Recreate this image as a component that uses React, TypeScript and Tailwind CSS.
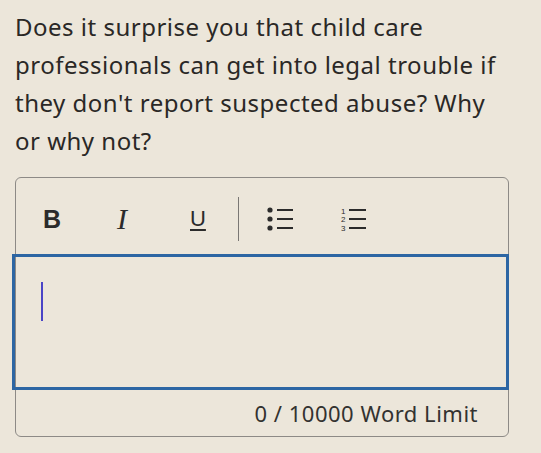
import React from 'react';

const BulletIcon = () => (
  <svg width="28" height="26" viewBox="0 0 28 26" fill="none">
    <circle cx="3" cy="4" r="2.6" fill="#2b2b2b" />
    <circle cx="3" cy="13" r="2.6" fill="#2b2b2b" />
    <circle cx="3" cy="22" r="2.6" fill="#2b2b2b" />
    <path d="M10 4h16M10 13h16M10 22h16" stroke="#2b2b2b" strokeWidth="2.2" />
  </svg>
);

const NumberIcon = () => (
  <svg width="28" height="26" viewBox="0 0 28 26" fill="none">
    <text x="0" y="7.5" fontSize="8" fontFamily="Liberation Sans, sans-serif" fill="#2b2b2b">1</text>
    <text x="0" y="16" fontSize="8" fontFamily="Liberation Sans, sans-serif" fill="#2b2b2b">2</text>
    <text x="0" y="25" fontSize="8" fontFamily="Liberation Sans, sans-serif" fill="#2b2b2b">3</text>
    <path d="M8 4h17M8 13h17M8 22h17" stroke="#2b2b2b" strokeWidth="2.2" />
  </svg>
);

export default function App() {
  return (
    <div className="w-[541px] h-[453px] bg-[#ece6da] pt-[8px] pl-[15px] overflow-hidden" style={{ fontFamily: '"Noto Sans", sans-serif' }}>
      <p className="text-[24px] leading-[38px] tracking-[0.5px] text-[#2a2826] w-[496px]">
        Does it surprise you that child care professionals can get into legal trouble if they don't report suspected abuse? Why or why not?
      </p>

      <div className="mt-[17px] w-[494px] border border-[#8d8a86] rounded-[6px]">
        <div className="h-[76px] flex items-center pt-[6px] pl-[27px]">
          <span className="w-[18px] text-[25px] font-bold text-[#2b2b2b] leading-none" style={{ fontFamily: '"Liberation Sans", sans-serif' }}>B</span>
          <span className="ml-[56px] w-[18px] text-[30px] italic text-[#2b2b2b] leading-none" style={{ fontFamily: '"Liberation Serif", serif' }}>I</span>
          <span className="ml-[55px] text-[22px] underline underline-offset-[3px] text-[#2b2b2b] leading-none" style={{ fontFamily: '"Liberation Sans", sans-serif' }}>U</span>
          <span className="ml-[32px] w-px h-[44px] bg-[#7a7774]" />
          <span className="ml-[28px] flex"><BulletIcon /></span>
          <span className="ml-[46px] flex"><NumberIcon /></span>
        </div>
        <div className="-ml-[4px] -mr-px h-[136px] border-[3px] border-[#2d66a3] pt-[25px] pl-[26px]">
          <div className="w-[2px] h-[39px] bg-[#4a44c6]" />
        </div>
        <div className="h-[46px] flex items-center justify-end pr-[30px] text-[22px] tracking-[0.5px] text-[#333230]">
          0 / 10000 Word Limit
        </div>
      </div>
    </div>
  );
}
